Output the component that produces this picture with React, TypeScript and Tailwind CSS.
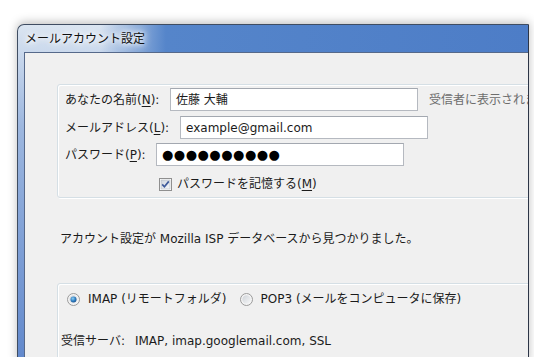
import React from 'react';

const font = { fontFamily: '"DejaVu Sans", "Noto Sans CJK JP", sans-serif' };

function Ul({ c }: { c: string }) {
    return <span className="underline underline-offset-2">{c}</span>;
}

function Checkbox() {
    return (
        <svg width="13" height="13" viewBox="0 0 13 13" className="shrink-0">
            <defs>
                <linearGradient id="cbg" x1="0" y1="0" x2="1" y2="1">
                    <stop offset="0" stopColor="#cdd3dc" />
                    <stop offset="1" stopColor="#f6f8fa" />
                </linearGradient>
            </defs>
            <rect x="0.5" y="0.5" width="12" height="12" fill="#fff" stroke="#8f8f8f" />
            <rect x="2" y="2" width="9" height="9" fill="url(#cbg)" stroke="#b3b8c0" strokeWidth="0.6" />
            <path d="M3.2 6.4 L5.4 8.8 L9.8 3.4" fill="none" stroke="#3e5a9a" strokeWidth="1.7" />
        </svg>
    );
}

function Radio({ on }: { on?: boolean }) {
    return (
        <svg width="13" height="13" viewBox="0 0 13 13" className="shrink-0">
            <defs>
                <radialGradient id="rdot" cx="0.4" cy="0.35" r="0.7">
                    <stop offset="0" stopColor="#8fd0f5" />
                    <stop offset="0.6" stopColor="#2c7cc0" />
                    <stop offset="1" stopColor="#1c4f8a" />
                </radialGradient>
                <linearGradient id="rbg" x1="0" y1="0" x2="1" y2="1">
                    <stop offset="0" stopColor="#cfd3d8" />
                    <stop offset="1" stopColor="#f6f7f8" />
                </linearGradient>
            </defs>
            <circle cx="6.5" cy="6.5" r="6" fill="#f4f4f4" stroke="#9a9a9a" />
            <circle cx="6.5" cy="6.5" r="4.2" fill="url(#rbg)" />
            {on && <circle cx="6.5" cy="6.5" r="3" fill="url(#rdot)" />}
        </svg>
    );
}

function Field({ w, children }: { w: string; children?: React.ReactNode }) {
    return (
        <div className={`${w} h-[23px] bg-white border border-[#b5b9c0] border-t-[#a3a8b0] flex items-center px-[5px] shrink-0`}>
            {children}
        </div>
    );
}

export default function App() {
    return (
        <div className="w-[534px] h-[357px] bg-white overflow-hidden text-[12px] text-[#1b1b1b]" style={font}>
            <div className="ml-[17px] mt-[24px] w-[512px] h-[340px] rounded-tl-[7px] border border-[#3f4d62] border-r-[#2c3547] shadow-[0_-2px_10px_rgba(0,0,0,0.25)] bg-gradient-to-b from-[#dbe5f1] via-[#9db7df] via-[30%] to-[#6188cc] flex flex-col">
                {/* Title bar */}
                <div className="h-[27px] flex items-center pl-[7px] rounded-tl-[7px] bg-gradient-to-r from-transparent from-[16%] via-[#5585ca] via-[29%] to-[#4d7dc7]">
                    <span className="text-[12px] text-[#111] [text-shadow:0_0_10px_#fff,0_0_8px_#fff,0_0_4px_#fff]">メールアカウント設定</span>
                </div>

                {/* Content */}
                <div className="flex-1 ml-[6px] bg-[#f0f0f0] border-l border-t border-[#56698a] pl-[32px] pt-[31px] overflow-hidden">
                    {/* Identity group */}
                    <div className="w-[520px] h-[114px] rounded-[3px] border border-[#d5dfe5] shadow-[inset_1px_1px_0_#fff,1px_1px_0_#fff] pl-[7px] pt-[3px] flex flex-col gap-[4px]">
                        <div className="flex items-center h-[23px]">
                            <span className="w-[105px] shrink-0">あなたの名前(<Ul c="N" />):</span>
                            <Field w="w-[248px]">佐藤 大輔</Field>
                            <span className="ml-[11px] text-[#6d6d6d] whitespace-nowrap">受信者に表示されます</span>
                        </div>
                        <div className="flex items-center h-[23px] mt-[1px]">
                            <span className="w-[115px] shrink-0">メールアドレス(<Ul c="L" />):</span>
                            <Field w="w-[248px]">example@gmail.com</Field>
                        </div>
                        <div className="flex items-center h-[23px]">
                            <span className="w-[91px] shrink-0">パスワード(<Ul c="P" />):</span>
                            <Field w="w-[248px]">
                                <span className="text-[13px] tracking-[0.5px] text-black">●●●●●●●●●●</span>
                            </Field>
                        </div>
                        <div className="flex items-center gap-[5px] pl-[94px] mt-[5px]">
                            <Checkbox />
                            <span>パスワードを記憶する(<Ul c="M" />)</span>
                        </div>
                    </div>

                    <div className="mt-[32px] pl-[3px]">アカウント設定が Mozilla ISP データベースから見つかりました。</div>

                    {/* Server group */}
                    <div className="mt-[35px] w-[520px] h-[100px] rounded-[3px] border border-[#d5dfe5] shadow-[inset_1px_1px_0_#fff,1px_1px_0_#fff] pl-[9px] pt-[6px]">
                        <div className="flex items-center">
                            <Radio on />
                            <span className="ml-[8px]">IMAP (リモートフォルダ)</span>
                            <span className="ml-[13px]"><Radio /></span>
                            <span className="ml-[8px]">POP3 (メールをコンピュータに保存)</span>
                        </div>
                        <div className="mt-[24px] flex items-center -ml-[6px]">
                            <span>受信サーバ:</span>
                            <span className="ml-[10px]">IMAP, imap.googlemail.com, SSL</span>
                        </div>
                    </div>
                </div>
            </div>
        </div>
    );
}
